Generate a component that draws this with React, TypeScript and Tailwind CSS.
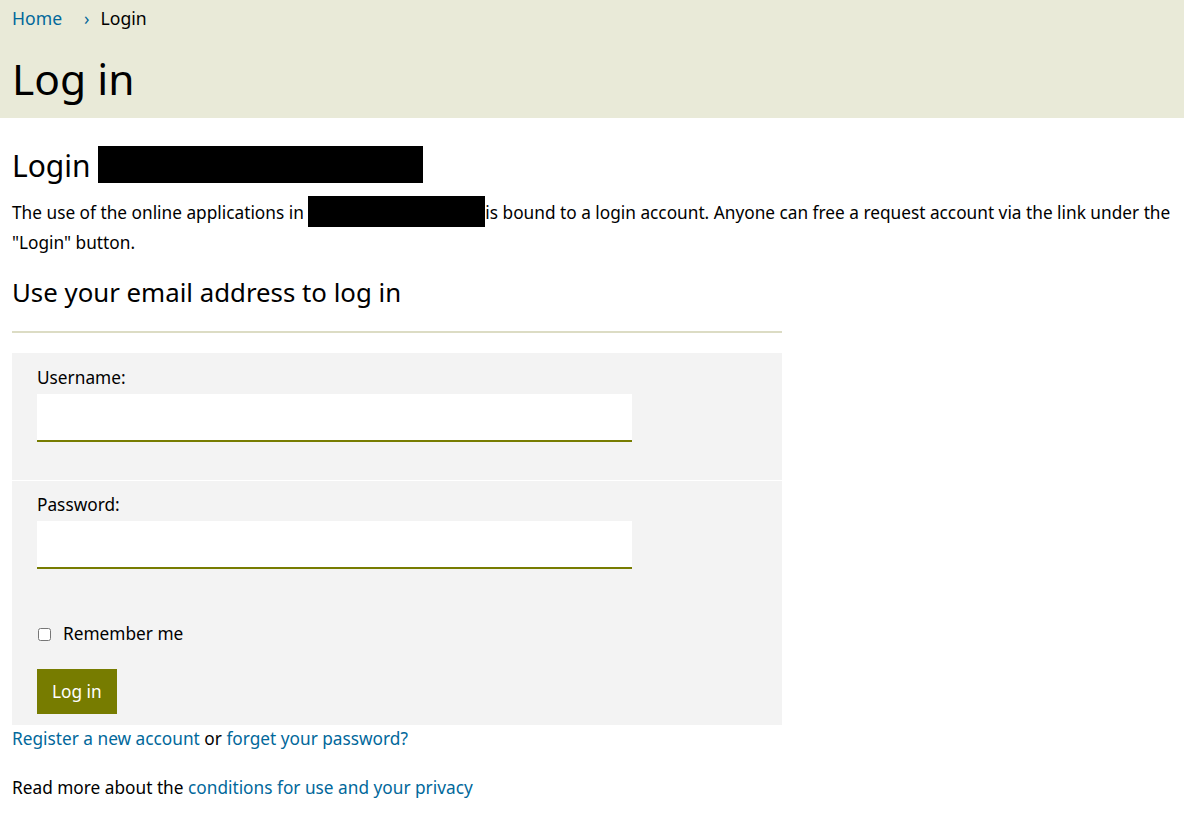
export default function App() {
  return (
    <div className="min-h-screen bg-white text-black" style={{ fontFamily: '"Noto Sans", "Open Sans", sans-serif' }}>
      <div className="bg-[#e9ead8] px-3 pt-[4px] h-[118px]">
        <div className="flex items-center text-[17.6px] leading-[28px]">
          <a href="#" className="text-[#01689b]">Home</a>
          <span className="text-[#01689b] ml-[22px] mr-[11px]">›</span>
          <span>Login</span>
        </div>
        <h1 className="text-[42.5px] leading-[60px] mt-[17px]">Log in</h1>
      </div>

      <div className="px-3 text-[17.25px]">
        <div className="flex items-center mt-[26px] h-[40px]">
          <h2 className="text-[30px] leading-[40px] mt-[4px]">Login</h2>
          <span className="ml-[7px] w-[325px] h-[37px] bg-black inline-block" />
        </div>
        <p className="leading-[30px] mt-[14px]">
          The use of the online applications in{" "}
          <span className="inline-block align-middle w-[177px] h-[31px] bg-black -mt-[5px]" />
          is bound to a login account. Anyone can free a request account via the link under the "Login" button.
        </p>

        <h3 className="text-[25.8px] leading-[34px] mt-[17px]">Use your email address to log in</h3>
        <div className="w-[770px] border-b-2 border-[#dcdcc4] mt-[22px]" />

        <form className="w-[770px] bg-[#f3f3f3] mt-[20px]" onSubmit={(e) => e.preventDefault()}>
          <div className="px-[25px] pt-[13px] pb-[38px] border-b border-white">
            <label className="block leading-[24px]">Username:</label>
            <input className="block mt-[4px] w-[595px] h-[48px] bg-white border-b-2 border-[#777c00] outline-none" />
          </div>
          <div className="px-[25px] pt-[12px] pb-[11px]">
            <label className="block leading-[24px]">Password:</label>
            <input type="password" className="block mt-[4px] w-[595px] h-[48px] bg-white border-b-2 border-[#777c00] outline-none" />
            <label className="flex items-center mt-[53px] leading-[24px]">
              <input type="checkbox" className="w-[13px] h-[13px] ml-[1px] mr-[12px]" />
              Remember me
            </label>
            <button className="mt-[23px] bg-[#777c00] text-white px-[15px] h-[45px]">Log in</button>
          </div>
        </form>

        <p className="leading-[28px] mt-0">
          <a href="#" className="text-[#01689b]">Register a new account</a> or{" "}
          <a href="#" className="text-[#01689b]">forget your password?</a>
        </p>
        <p className="leading-[28px] mt-[21px]">
          Read more about the <a href="#" className="text-[#01689b]">conditions for use and your privacy</a>
        </p>
      </div>
    </div>
  );
}
